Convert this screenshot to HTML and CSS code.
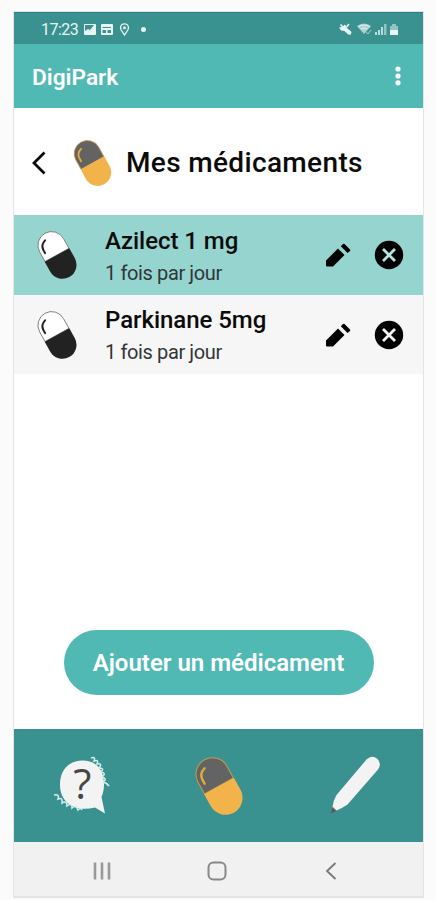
FILE: index.html
```html
<!DOCTYPE html>
<html lang="fr">
<head>
<meta charset="utf-8">
<title>DigiPark</title>
<link rel="stylesheet" href="styles.css">
</head>
<body>
<svg class="defs" width="0" height="0">
  <symbol id="pill" viewBox="0 0 48 58">
    <g transform="rotate(-29 24 29)">
      <path class="pill-top" d="M7.500 29V15.500a16.500 16.500 0 0 1 33 0V29z"/>
      <path class="pill-bottom" d="M7 29h34v13.500a17 17 0 0 1-34 0z"/>
      <path class="pill-shine" d="M12.500 20v-4c0-4 2.500-8 7.500-9.500"/>
    </g>
  </symbol>
  <symbol id="pencil" viewBox="0 0 26 26">
    <path d="M1 18.500 13 6.500l6.500 6.500L8 24.500H2q-1 0-1-1zM15.800 4.200 18 2Q18.800 1.300 19.500 2L25 7.500Q25.500 8.200 25 9L22.500 11z"/>
  </symbol>
  <symbol id="remove" viewBox="0 0 30 30">
    <circle cx="15" cy="15" r="14.200"/>
    <path class="cross" d="m9 9 12 12M21 9 9 21"/>
  </symbol>
</svg>
<div class="phone">
  <div class="status">
    <span class="time">17:23</span>
    <svg class="status-left" width="70" height="16" viewBox="0 0 70 16" fill="#e9f5f4">
      <path fill-rule="evenodd" d="M2 3h10q1 0 1 1v9q0 1-1 1H2q-1 0-1-1V4q0-1 1-1zm0 7 3-2 2 1 4-5H2z"/>
      <path fill-rule="evenodd" d="M19 3h10q1 0 1 1v9q0 1-1 1H19q-1 0-1-1V4q0-1 1-1zm.5 3v1H28V6zm0 3v3H23V9zm5 0v3H28V9z"/>
      <path fill="none" stroke="#e9f5f4" stroke-width="1.300" d="M41.500 14c-2-3-4-5-4-7.200a4 4 0 0 1 8 0C45.500 9 43.500 11 41.500 14z"/>
      <circle cx="41.500" cy="6.800" r="1.500"/>
      <circle cx="60.500" cy="8.500" r="2.500"/>
    </svg>
    <svg class="status-right" width="62" height="16" viewBox="0 0 62 16" fill="#e9f5f4">
      <path d="M1 6.500 4 6l3-2.500 2 3.500 4.500 4-1 3-3-1-3-3-3.500-.5z"/>
      <path d="m2.500 3.500 9 9.500M8.500 6l2.500-3" stroke="#e9f5f4" stroke-width="1.500"/>
      <path d="M19 5q7-5 14 0l-7 8z" opacity=".65"/>
      <path d="M20 6q6-4 12 0M23 8q3-2 6 0" fill="none" stroke="#e9f5f4" stroke-width="1" opacity=".8"/>
      <path d="m28 11 2 2 3-4" fill="none" stroke="#e9f5f4" opacity=".6"/>
      <path d="M37 11h2v3h-2zM40 9h2v5h-2zM43 6h2v8h-2z" opacity=".75"/><path d="M46 3h2.500v11H46z" opacity=".5"/>
      <path d="M52 5h2V3h4v2h2v5h-8z" opacity=".5"/><path d="M52 9h8v5h-8z"/>
    </svg>
  </div>
  <header class="appbar">
    <span class="brand">DigiPark</span>
    <svg width="6" height="20" viewBox="0 0 6 20" fill="#fff"><circle cx="3" cy="3" r="2.600"/><circle cx="3" cy="10" r="2.600"/><circle cx="3" cy="16.800" r="2.600"/></svg>
  </header>
  <div class="heading">
    <svg class="back" width="14" height="24" viewBox="0 0 14 24"><path d="M12.500 1.500 2 12l10.500 10.500"/></svg>
    <svg class="heading-pill amber" width="39" height="46"><use href="#pill"/></svg>
    <h1>Mes médicaments</h1>
  </div>
  <div class="list">
    <div class="item selected">
      <svg class="item-pill mono" width="40" height="48"><use href="#pill"/></svg>
      <div class="info"><div class="name">Azilect 1 mg</div><div class="dose">1 fois par jour</div></div>
      <svg class="edit" width="26" height="26"><use href="#pencil"/></svg>
      <svg class="remove" width="30" height="30"><use href="#remove"/></svg>
    </div>
    <div class="item">
      <svg class="item-pill mono" width="40" height="48"><use href="#pill"/></svg>
      <div class="info"><div class="name">Parkinane 5mg</div><div class="dose">1 fois par jour</div></div>
      <svg class="edit" width="26" height="26"><use href="#pencil"/></svg>
      <svg class="remove" width="30" height="30"><use href="#remove"/></svg>
    </div>
  </div>
  <div class="action"><button class="add">Ajouter un médicament</button></div>
  <nav class="tabs">
    <svg class="tab-help" width="64" height="64" viewBox="0 0 64 64">
      <path d="M31.500 6.500c14 0 21.500 9 21.500 24 0 5-1 9-2.500 12.500L54 59.500 44 53.500c-18 4.500-35-3-35-23 0-14.500 9-24 22.500-24z" fill="#f3f3f3"/>
      <path class="squiggle" d="M40 4q5-2 3 3q5-2 3 3q6-1 2 4q6 0 2 4q6 1 1 5q6 2 1 5q4 1 6 4"/>
      <path class="squiggle" d="M3 41q6-1 4 4q5-2 4 4q5-3 5 3q5-4 5 2q4-4 6 2q3-3 4 0"/>
      <text class="question" x="22.200" y="45">?</text>
    </svg>
    <svg class="tab-pill amber" width="48" height="58"><use href="#pill"/></svg>
    <svg class="tab-pen" width="52" height="60" viewBox="0 0 52 60">
      <path d="M37.500 3.500q5.500-5 11-.5 4.500 5 .5 10.500L18.500 48.500q-5 3.500-11 6l-4-3.500q.5-6 4-12z" fill="#f3f3f3"/>
      <path d="m3.500 51 4 3.500L2 57.500z" fill="#5b5657"/>
      <path d="m3.500 51 4 3.500" stroke="#b9adad"/>
    </svg>
  </nav>
  <div class="system">
    <svg width="18" height="18" viewBox="0 0 18 18" stroke="#999" stroke-width="2.600"><path d="M2 .5v17M9 .5v17M16 .5v17"/></svg>
    <svg class="home" width="20" height="20" viewBox="0 0 20 20" fill="none" stroke="#888" stroke-width="2"><rect x="1.500" y="1.500" width="17" height="17" rx="5"/></svg>
    <svg width="12" height="18" viewBox="0 0 12 18" fill="none" stroke="#777" stroke-width="1.800"><path d="M10.500 1 2 9l8.500 8"/></svg>
  </div>
</div>
</body>
</html>
```
FILE: styles.css
```css
* { box-sizing: border-box; }
body {
  margin: 0;
  height: 900px;
  overflow: hidden;
  padding: 11px 12px 0 13px;
  background: #fbfbfb;
  font-family: Roboto, "Liberation Sans", sans-serif;
  color: #0b0b0b;
}
.defs { position: absolute; }
svg { display: block; flex: none; }
.phone {
  display: flex;
  flex-direction: column;
  width: 411px;
  height: 887px;
  border: 1px solid #e4e4e4;
  border-bottom-width: 2px;
  background: #fff;
}
.status {
  flex: none;
  display: flex;
  align-items: center;
  height: 32px;
  padding: 1px 23px 0 27px;
  background: #3a9290;
  border-top: 1px solid #258482;
}
.time { width: 37px; font-size: 16px; letter-spacing: -.5px; color: #e9f5f4; }
.status-left { margin: 0 auto 0 5px; }
.appbar {
  flex: none;
  display: flex;
  align-items: center;
  justify-content: space-between;
  height: 64px;
  padding: 0 22px 0 18px;
  background: #50b9b4;
}
.brand { font-size: 22.7px; font-weight: 600; color: #fff; padding-top: 2px; }
.heading {
  flex: none;
  display: flex;
  align-items: center;
  height: 107px;
  padding: 2px 0 0 18px;
}
.back path { fill: none; stroke: #0b0b0b; stroke-width: 2.800; }
.heading-pill { margin-left: 27px; }
h1 { margin: 0 0 0 14px; font-size: 28px; font-weight: 500; letter-spacing: .35px; white-space: nowrap; }
.list { flex: none; }
.item {
  display: flex;
  align-items: center;
  height: 79px;
  padding: 0 19px 0 23px;
  background: #f6f6f6;
}
.item.selected { height: 80px; background: #95d4cf; }
.info { flex: 1; margin-left: 28px; padding-top: 3px; white-space: nowrap; }
.name { font-size: 24px; line-height: 32px; font-weight: 500; letter-spacing: -.05px; }
.dose { font-size: 20px; line-height: 32px; letter-spacing: -.38px; color: #303638; }
.remove { margin-left: 23px; }
.cross { stroke: var(--cross, #f6f6f6); stroke-width: 2.800; }
.selected { --cross: #b9e5e1; }
.action { flex: 1; display: flex; justify-content: center; align-items: flex-end; padding-bottom: 34px; }
.add {
  width: 310px;
  height: 65px;
  border: 0;
  border-radius: 33px;
  background: #50b9b4;
  color: #fff;
  padding: 0;
  font: 600 24px Roboto, "Liberation Sans", sans-serif;
  white-space: nowrap;
}
.tabs {
  flex: none;
  display: flex;
  align-items: center;
  height: 113px;
  padding-left: 37px;
  background: #3a9290;
}
.tab-pill { margin-left: 80px; }
.tab-pen { margin-left: 86px; }
.squiggle { fill: none; stroke: #d7eeec; stroke-width: 1.500; }
.question { font: 42px "Open Sans", sans-serif; fill: #454545; }
.pill-top { fill: var(--top); stroke: var(--rim); stroke-width: 1; }
.pill-bottom { fill: var(--bottom); }
.pill-shine { fill: none; stroke: var(--shine); stroke-width: 2.400; stroke-linecap: round; }
.amber { --top: #636363; --rim: #c59a4c; --bottom: #f3b34b; --shine: #e5a83e; }
.mono { --top: #fff; --rim: #777; --bottom: #222; --shine: #222; }
.system {
  flex: none;
  display: flex;
  align-items: center;
  justify-content: space-between;
  height: 54px;
  padding: 3px 86px 0 79px;
  background: #f1f1f1;
}
.home { margin-right: 3px; }
```
